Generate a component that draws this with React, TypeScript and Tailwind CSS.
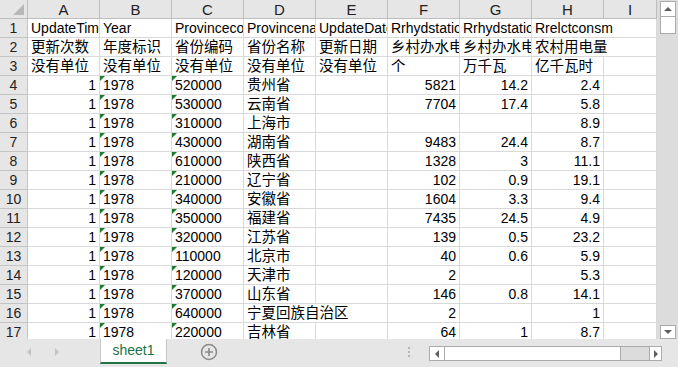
import React from "react";

const COLS = ["A", "B", "C", "D", "E", "F", "G", "H", "I"];

const head: string[][] = [
  ["UpdateTime", "Year", "Provincecode", "Provincename", "UpdateDate", "Rrhydstationnum", "Rrhydstationcap", "Rrelctconsm"],
  ["更新次数", "年度标识", "省份编码", "省份名称", "更新日期", "乡村办水电站数", "乡村办水电站装机容量", "农村用电量"],
  ["没有单位", "没有单位", "没有单位", "没有单位", "没有单位", "个", "万千瓦", "亿千瓦时"],
];

// code, name, stations, capacity, consumption
const body: string[][] = [
  ["520000", "贵州省", "5821", "14.2", "2.4"],
  ["530000", "云南省", "7704", "17.4", "5.8"],
  ["310000", "上海市", "", "", "8.9"],
  ["430000", "湖南省", "9483", "24.4", "8.7"],
  ["610000", "陕西省", "1328", "3", "11.1"],
  ["210000", "辽宁省", "102", "0.9", "19.1"],
  ["340000", "安徽省", "1604", "3.3", "9.4"],
  ["350000", "福建省", "7435", "24.5", "4.9"],
  ["320000", "江苏省", "139", "0.5", "23.2"],
  ["110000", "北京市", "40", "0.6", "5.9"],
  ["120000", "天津市", "2", "", "5.3"],
  ["370000", "山东省", "146", "0.8", "14.1"],
  ["640000", "宁夏回族自治区", "2", "", "1"],
  ["220000", "吉林省", "64", "1", "8.7"],
];

const isCjk = (s: string) => /[\u4e00-\u9fff]/.test(s);

type CellProps = {
  text?: string;
  right?: boolean;
  span?: boolean;
  tri?: boolean;
};

const Cell: React.FC<CellProps> = ({ text = "", right, span, tri }) => {
  return (
    <div
      className={
        "relative h-[19px] bg-white border-r border-b border-[#d9d9d9] overflow-hidden whitespace-nowrap px-[3px] leading-[18px] text-black " +
        (span ? "col-span-2 " : "") +
        (right ? "text-right " : "text-left ") +
        (isCjk(text) ? "text-[14.5px]" : "text-[14px]")
      }
    >
      {tri && (
        <span className="absolute left-0 top-0 w-0 h-0 border-t-[5px] border-r-[5px] border-t-[#1a7d2e] border-r-transparent" />
      )}
      {text}
    </div>
  );
};

const RowHead: React.FC<{ n: number }> = ({ n }) => (
  <div className="h-[19px] bg-[#e6e6e6] border-r border-b border-[#c4c4c4] text-center text-[14px] leading-[19px] text-[#222]">
    {n}
  </div>
);

const App: React.FC = () => {
  const rows: CellProps[][] = [];
  head.forEach((r, i) => {
    const cells: CellProps[] = r.map((t) => ({ text: t }));
    // last header text runs on into the empty column I
    if (i < 2) {
      cells[7] = { text: r[7], span: true };
    } else {
      cells.push({ text: "" });
    }
    rows.push(cells);
  });
  body.forEach((r) => {
    const cells: CellProps[] = [
      { text: "1", right: true },
      { text: "1978", tri: true },
      { text: r[0], tri: true },
    ];
    if (r[1].length > 3) {
      cells.push({ text: r[1], span: true });
    } else {
      cells.push({ text: r[1] }, { text: "" });
    }
    cells.push(
      { text: r[2], right: true },
      { text: r[3], right: true },
      { text: r[4], right: true },
      { text: "" }
    );
    rows.push(cells);
  });

  return (
    <div className="w-[678px] h-[367px] flex flex-col bg-[#e6e6e6] overflow-hidden font-['Liberation_Sans','Noto_Sans_CJK_SC',sans-serif]">
      <div className="flex h-[339px]">
        <div className="w-[657px] h-[339px] overflow-hidden bg-white">
          <div className="grid grid-cols-[28px_repeat(8,72px)_53px]">
            {/* corner */}
            <div className="relative h-[19px] bg-[#e6e6e6] border-r border-b border-[#bdbdbd]">
              <span className="absolute right-[3px] bottom-[3px] w-0 h-0 border-b-[11px] border-l-[11px] border-b-[#b8b8b8] border-l-transparent" />
            </div>
            {COLS.map((c) => (
              <div
                key={c}
                className="h-[19px] bg-[#e6e6e6] border-r border-b border-[#bdbdbd] text-center text-[15px] leading-[19px] text-[#222]"
              >
                {c}
              </div>
            ))}
            {rows.map((cells, i) => (
              <React.Fragment key={i}>
                <RowHead n={i + 1} />
                {cells.map((c, j) => (
                  <Cell key={j} {...c} />
                ))}
              </React.Fragment>
            ))}
          </div>
        </div>
        {/* vertical scrollbar */}
        <div className="w-[21px] h-[339px] bg-[#dcdcdc] flex flex-col pl-[3px] pt-[1px] pb-0">
          <div className="w-[16px] h-[16px] bg-white border border-[#ababab] flex items-center justify-center">
            <span className="w-0 h-0 border-l-[4px] border-r-[4px] border-b-[4px] border-l-transparent border-r-transparent border-b-[#606060]" />
          </div>
          <div className="w-[16px] h-[17px] bg-white border border-t-0 border-[#ababab]" />
          <div className="flex-1" />
          <div className="w-[16px] h-[14px] bg-white border border-[#ababab] flex items-center justify-center">
            <span className="w-0 h-0 border-l-[4px] border-r-[4px] border-t-[4px] border-l-transparent border-r-transparent border-t-[#606060]" />
          </div>
        </div>
      </div>

      {/* sheet tabs bar */}
      <div className="h-[28px] flex items-start">
        <div className="w-[100px] h-[26px] flex items-center pl-[27px] gap-[24px]">
          <span className="w-0 h-0 border-t-[4px] border-b-[4px] border-r-[4px] border-t-transparent border-b-transparent border-r-[#c4c4c4]" />
          <span className="w-0 h-0 border-t-[4px] border-b-[4px] border-l-[4px] border-t-transparent border-b-transparent border-l-[#c4c4c4]" />
        </div>
        <div className="w-[67px] h-[25px] bg-white border-l border-r border-[#c8c8c8] border-b-2 border-b-[#217346] flex items-center justify-center text-[14px] text-[#217346]">
          sheet1
        </div>
        <div className="w-[83px] h-[26px] flex items-center justify-center">
          <svg width="18" height="18" viewBox="0 0 18 18">
            <circle cx="9" cy="9" r="7.5" fill="none" stroke="#8a8a8a" strokeWidth="1.5" />
            <path d="M9 5v8M5 9h8" stroke="#8a8a8a" strokeWidth="1.6" />
          </svg>
        </div>
        <div className="w-[155px]" />
        <div className="w-[8px] h-[26px] flex flex-col items-center justify-center gap-[2px]">
          <span className="w-[2px] h-[2px] bg-[#b5b5b5]" />
          <span className="w-[2px] h-[2px] bg-[#b5b5b5]" />
          <span className="w-[2px] h-[2px] bg-[#b5b5b5]" />
        </div>
        <div className="w-[16px]" />
        <div className="mt-[7px] w-[233px] h-[15px] flex border border-[#ababab] bg-[#dcdcdc]">
          <div className="w-[15px] h-full bg-white border-r border-[#ababab] flex items-center justify-center">
            <span className="w-0 h-0 border-t-[4px] border-b-[4px] border-r-[4px] border-t-transparent border-b-transparent border-r-[#606060]" />
          </div>
          <div className="w-[176px] h-full bg-white border-r border-[#ababab]" />
          <div className="flex-1" />
          <div className="w-[12px] h-full bg-white border-l border-[#ababab] flex items-center justify-center">
            <span className="w-0 h-0 border-t-[4px] border-b-[4px] border-l-[4px] border-t-transparent border-b-transparent border-l-[#606060]" />
          </div>
        </div>
      </div>
    </div>
  );
};

export default App;
